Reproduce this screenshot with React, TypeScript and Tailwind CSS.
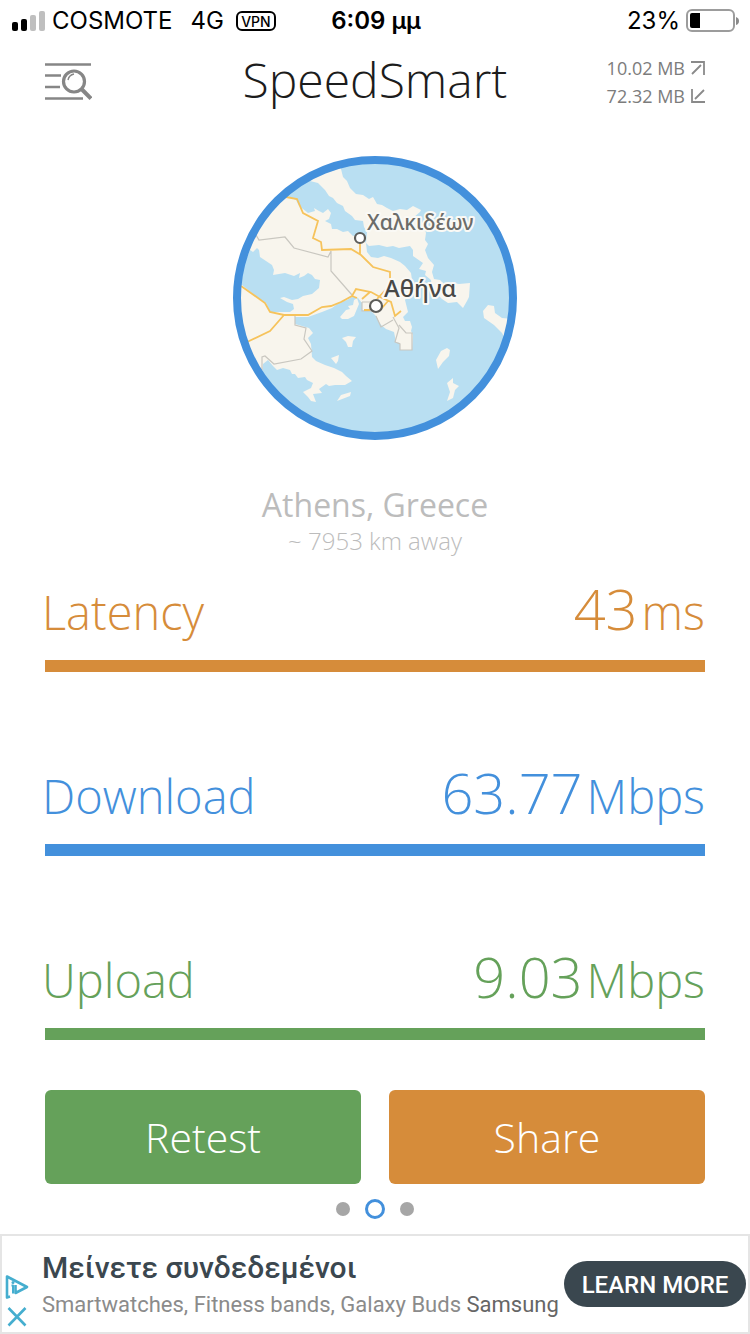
import React from 'react';

function SignalIcon() {
  return (
    <svg width="34" height="20" viewBox="0 0 34 20" aria-hidden="true">
      <rect x="0" y="11" width="6" height="9" rx="2" fill="#000" />
      <rect x="9" y="8" width="6" height="12" rx="2" fill="#000" />
      <rect x="18" y="4" width="6" height="16" rx="2" fill="#bfbfbf" />
      <rect x="27" y="0" width="6" height="20" rx="2" fill="#bfbfbf" />
    </svg>
  );
}

function BatteryIcon() {
  return (
    <svg width="54" height="24" viewBox="0 0 54 24" aria-hidden="true">
      <rect x="1" y="1" width="47" height="21" rx="5" fill="none" stroke="#9c9c9c" strokeWidth="2" />
      <path d="M4 6a2 2 0 0 1 2-2h8v15H6a2 2 0 0 1-2-2z" fill="#000" />
      <path d="M50 8q3 1 3 4t-3 4z" fill="#8a8a8a" />
    </svg>
  );
}

function HistoryIcon() {
  return (
    <svg width="47" height="38" viewBox="0 0 47 38" fill="none" stroke="#868686" aria-hidden="true">
      <path d="M0 1.5H46M0 12.5H16M0 24H15M0 35.5H38" strokeWidth="2.6" />
      <circle cx="29" cy="18.5" r="10.5" strokeWidth="3.2" />
      <path d="M23 17q1-5 6-6" strokeWidth="1.4" />
      <path d="M36.500 26L46 35.500" strokeWidth="4" />
    </svg>
  );
}

function TransferArrow({ up }: { up: boolean }) {
  return (
    <svg width="14" height="14" viewBox="0 0 14 14" fill="none" stroke="#8a8a8a" strokeWidth="1.8" aria-hidden="true">
      <path d={up ? 'M0 1H13V14M1 13L10 4' : 'M1 0V13H14M13 1L4 10'} />
    </svg>
  );
}

function ServerMap() {
  return (
    <svg className="size-[284px]" viewBox="233 156 284 284" role="img" aria-label="Athens, Greece">
      <defs>
        <clipPath id="disc">
          <circle cx="375" cy="298" r="138" />
        </clipPath>
      </defs>
      <g clipPath="url(#disc)">
        <rect x="233" y="156" width="284" height="284" fill="#b9dff2" />
        <g fill="#f8f5ed">
          <path d="M233 190L287 196L296 200L299 206L303 209L308 213L315 211L314 208L319 211L323 213L328 209L331 213L329 219L325 221L331 224L332 229L337 229L343 232L348 231L353 236L360 234L366 243L367 252L371 257L378 258L384 256L391 258L400 262L405 266L411 273L413 287L410 292L405 300L408 312L403 317L405 321L410 321L412 327L411 331L413 335L412 350L400 350L400 343L396 342L394 332L386 329L381 325L376 316L371 311L362 310L362 303L358 298L352 297L347 300L340 302L332 308L322 312L308 317L295 317L295 324L302 326L309 328L313 333L308 338L311 344L312 357L316 361L325 365L334 368L342 372L346 376L352 381L345 385L335 385L329 386L326 384L319 389L322 393L313 394L316 402L311 401L308 397L303 392L311 388L313 383L307 380L305 377L298 378L295 374L292 374L290 370L283 368L277 370L273 366L268 360L263 364L262 376L233 376L233 285L242 285L258 298L266 303L270 312L290 312L294 309L293 304L287 302L280 298L284 297L292 300L298 299L303 296L312 294L319 288L320 280L315 279L312 275L308 273L304 276L299 278L300 273L294 276L285 273L273 275L274 270L272 265L260 257L259 250L257 248L253 252L250 250L246 260L233 274z" />
          <path d="M310 181L318 183L325 190L329 196L333 198L337 203L343 206L345 211L352 216L355 220L363 221L364 227L367 232L366 243L369 246L379 245L387 247L393 246L399 248L410 246L413 250L413 256L423 263L419 269L426 271L425 275L431 280L432 289L442 299L448 303L457 302L463 308L467 301L469 297L470 283L459 284L453 283L445 285L440 280L434 279L432 272L434 265L428 258L425 250L428 244L425 240L426 233L423 223L413 218L420 212L421 210L413 206L407 210L400 209L393 211L387 208L382 205L377 204L373 197L369 199L363 195L356 194L350 188L347 181L343 177L340 165L320 163L300 180z" />
          <path d="M340 317L346 310L350 309L348 306L353 305L354 300L357 298L359 304L354 316L348 319L342 319zM342 338L348 336L356 337L353 341L352 347L348 347L346 342zM331 358L339 355L338 361L336 364zM337 401L341 395L351 392L350 396zM483 311L488 305L494 306L495 313L502 318L514 319L507 342L502 333L494 325L484 318zM436 360L441 351L447 348L450 350L449 356L443 362L438 369zM447 383L453 378L453 383L459 386L455 390L453 398L447 401L450 392z" />
        </g>
        <g fill="none" stroke="#c9c7c0" strokeWidth="1.2">
          <path d="M256 235L259 240L285 237L294 248L328 257L331 251V271L352 295M295 316L295 325L306 328L304 339L312 351L301 359L274 364L265 356L262 357V370M362 302H371M362 302V311H374M376 316L381 327L393 320M393 317L399 328L395 342L400 344V350H412V333H406L399 325" />
        </g>
        <g fill="none" stroke="#f6c35c" strokeWidth="1.8">
          <path d="M286 197L297 199L303 213L318 221L313 238L321 242L322 250L351 249L361 255L373 267L390 272V285L377 299M360 240V255M241 286L258 298L265 303L270 312L284 315L308 315L322 307L331 306L341 302L352 296L356 289L371 292L380 297L391 302L395 316L401 311M247 342L270 331L284 315M352 296L357 298M362 299L370 292M364 310H370M382 308L388 301" />
        </g>
        <g fill="#fff" stroke="#5d5d5a" strokeWidth="2.2">
          <circle cx="360" cy="238" r="5" />
          <circle cx="376" cy="306" r="6" />
        </g>
        <g className="font-['Noto_Sans',sans-serif]" stroke="#faf9f5" strokeWidth="4" strokeLinejoin="round" paintOrder="stroke">
          <text x="367" y="230" fontSize="21" fontWeight="500" fill="#6c6c69">Χαλκιδέων</text>
          <text x="384" y="297" fontSize="24" fontWeight="500" fill="#484846">Αθήνα</text>
        </g>
      </g>
      <circle cx="375" cy="298" r="138" fill="none" stroke="#4390dc" strokeWidth="8" />
    </svg>
  );
}

type MetricProps = { label: string; value: string; unit: string; text: string; bar: string };

function Metric({ label, value, unit, text, bar }: MetricProps) {
  return (
    <section className="h-[184px]">
      <div className={`-mx-1 flex h-20 items-baseline justify-between pl-px pr-1 ${text}`}>
        <h2 className="text-[47px] leading-[80px]">{label}</h2>
        <p className="flex items-baseline gap-1 leading-[80px]">
          <span className="text-[56px]">{value}</span>
          <span className="text-[47px]">{unit}</span>
        </p>
      </div>
      <div className={`mt-3 h-3 ${bar}`} />
    </section>
  );
}

const metrics: MetricProps[] = [
  { label: 'Latency', value: '43', unit: 'ms', text: 'text-[#d68c3a]', bar: 'bg-[#d68c3a]' },
  { label: 'Download', value: '63.77', unit: 'Mbps', text: 'text-[#4390dc]', bar: 'bg-[#4390dc]' },
  { label: 'Upload', value: '9.03', unit: 'Mbps', text: 'text-[#65a15a]', bar: 'bg-[#65a15a]' },
];

export default function App() {
  return (
    <div className="flex min-h-screen flex-col bg-white font-['Open_Sans',sans-serif] font-light">
      <div className="grid h-[42px] grid-cols-[1fr_auto_1fr] items-center pl-3 pr-2.5 font-['Inter',sans-serif] text-[24px] font-normal text-black">
        <div className="flex items-center">
          <SignalIcon />
          <span className="ml-1.5">COSMOTE</span>
          <span className="ml-[18px]">4G</span>
          <span className="ml-3 flex h-5 w-10 items-center justify-center rounded-md border-2 border-black text-[14px] font-medium">VPN</span>
        </div>
        <span className="font-semibold">6:09 μμ</span>
        <div className="flex items-center justify-end gap-1.5">
          <span>23%</span>
          <BatteryIcon />
        </div>
      </div>

      <header className="grid h-20 grid-cols-[1fr_auto_1fr] items-center px-[45px]">
        <button type="button" aria-label="History" className="w-[47px]">
          <HistoryIcon />
        </button>
        <h1 className="pb-1 text-[48px] leading-[72px] text-[#1c1c1c]">SpeedSmart</h1>
        <div className="flex flex-col items-end text-[18px] font-normal leading-7 text-[#7c7c7c]">
          <span className="flex items-center gap-1.5">10.02 MB <TransferArrow up /></span>
          <span className="flex items-center gap-1.5">72.32 MB <TransferArrow up={false} /></span>
        </div>
      </header>

      <main className="flex flex-col px-[45px]">
        <div className="flex flex-col items-center pt-[34px]">
          <ServerMap />
          <p className="mt-11 text-[32px] font-normal leading-[42px] text-[#bcbcbc]">Athens, Greece</p>
          <p className="text-[24px] leading-[30px] text-[#bcbcbc]">~ 7953 km away</p>
        </div>
        <div className="mt-3">
          {metrics.map((m) => (
            <Metric key={m.label} {...m} />
          ))}
        </div>
        <div className="-mt-[30px] grid grid-cols-2 gap-7 text-[41px] text-white">
          <button type="button" className="h-[94px] rounded-md bg-[#65a15a] pt-0.5">Retest</button>
          <button type="button" className="h-[94px] rounded-md bg-[#d68c3a] pt-0.5">Share</button>
        </div>
        <nav aria-label="Pages" className="flex h-[50px] items-center justify-center gap-[15px]">
          <button type="button" aria-label="Page 1" className="size-3.5 rounded-full bg-[#a6a6a6]" />
          <button type="button" aria-label="Page 2" aria-current="page" className="size-5 rounded-full border-3 border-[#4390dc]" />
          <button type="button" aria-label="Page 3" className="size-3.5 rounded-full bg-[#a6a6a6]" />
        </nav>
      </main>

      <aside className="flex h-[100px] items-center justify-between border-2 border-[#e5e5e5] pl-[3px] pr-0.5 font-['Roboto',sans-serif] font-normal">
        <div className="flex items-center">
          <div className="mt-[34px] flex w-6 flex-col gap-2 text-[#45aecf]">
            <a href="#adchoices" aria-label="Ad choices">
              <svg className="block" width="24" height="24" viewBox="0 0 24 24" fill="none" stroke="currentColor" strokeWidth="2.600" strokeLinejoin="round">
                <path d="M5 21.500L2 22.500V1.500L22 12L10.500 18V10" />
                <path d="M6.500 10.500H8V18.500" strokeWidth="2" />
                <circle cx="8" cy="7.500" r="1.500" fill="currentColor" stroke="none" />
              </svg>
            </a>
            <button type="button" aria-label="Close ad">
              <svg className="block" width="22" height="20" viewBox="0 0 22 20" fill="none" stroke="currentColor" strokeWidth="2.6">
                <path d="M3.500 1L20.500 18.500M20.500 1L3.500 18.500" />
              </svg>
            </button>
          </div>
          <div className="ml-[13px] pt-0.5">
            <p className="text-[30px] font-medium leading-10 text-[#3b474f]">Μείνετε συνδεδεμένοι</p>
            <p className="whitespace-nowrap text-[22px] leading-[34px] text-[#8b8b8b]">
              Smartwatches, Fitness bands, Galaxy Buds <span className="text-[#666]">Samsung</span>
            </p>
          </div>
        </div>
        <a href="#learn-more" className="flex h-[46px] w-[182px] shrink-0 items-center justify-center rounded-full bg-[#3a474f] pt-0.5 text-[24px] font-medium text-white">
          LEARN MORE
        </a>
      </aside>
    </div>
  );
}
